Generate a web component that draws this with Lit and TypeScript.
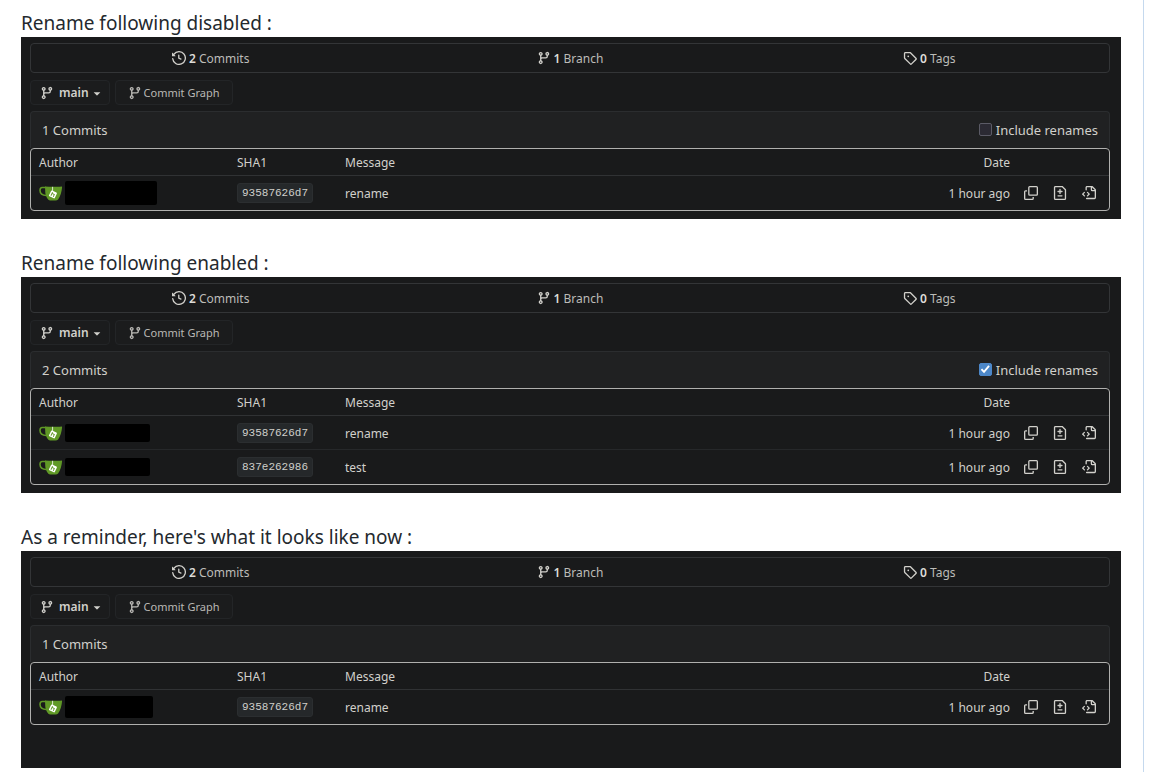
import { LitElement, html, css, svg, nothing } from "lit";
import { customElement, property } from "lit/decorators.js";

const icons: Record<string, unknown> = {
  history: svg`<path d="m.427 1.927 1.215 1.215a8.002 8.002 0 1 1-1.6 5.685.75.75 0 1 1 1.493-.154 6.5 6.5 0 1 0 1.18-4.458l1.358 1.358A.25.25 0 0 1 3.896 6H.25A.25.25 0 0 1 0 5.75V2.104a.25.25 0 0 1 .427-.177ZM7.75 4a.75.75 0 0 1 .75.75v2.992l2.028.812a.75.75 0 0 1-.557 1.392l-2.5-1A.751.751 0 0 1 7 8.25v-3.5A.75.75 0 0 1 7.75 4Z"/>`,
  branch: svg`<path d="M9.5 3.25a2.25 2.25 0 1 1 3 2.122V6A2.5 2.5 0 0 1 10 8.5H6a1 1 0 0 0-1 1v1.128a2.251 2.251 0 1 1-1.5 0V5.372a2.25 2.25 0 1 1 1.5 0v1.836A2.493 2.493 0 0 1 6 7h4a1 1 0 0 0 1-1v-.628A2.25 2.25 0 0 1 9.5 3.25Zm-6 0a.75.75 0 1 0 1.5 0 .75.75 0 0 0-1.5 0Zm8.25-.75a.75.75 0 1 0 0 1.5.75.75 0 0 0 0-1.5ZM4.25 12a.75.75 0 1 0 0 1.5.75.75 0 0 0 0-1.5Z"/>`,
  tag: svg`<path d="M1 7.775V2.75C1 1.784 1.784 1 2.75 1h5.025c.464 0 .91.184 1.238.513l6.25 6.25a1.75 1.75 0 0 1 0 2.474l-5.026 5.026a1.75 1.75 0 0 1-2.474 0l-6.25-6.25A1.752 1.752 0 0 1 1 7.775Zm1.5 0c0 .066.026.13.073.177l6.25 6.25a.25.25 0 0 0 .354 0l5.025-5.025a.25.25 0 0 0 0-.354l-6.25-6.25a.25.25 0 0 0-.177-.073H2.75a.25.25 0 0 0-.25.25ZM6 5a1 1 0 1 1 0 2 1 1 0 0 1 0-2Z"/>`,
  copy: svg`<path fill="none" stroke="currentColor" stroke-width="1.5" d="M6.5 .75h7.75a1 1 0 0 1 1 1V9.5a1 1 0 0 1-1 1H6.5a1 1 0 0 1-1-1V1.750a1 1 0 0 1 1-1ZM3.500 5.500H1.750a1 1 0 0 0-1 1v7.750a1 1 0 0 0 1 1H9.500a1 1 0 0 0 1-1V12.500"/>`,
  diff: svg`<path d="M1 1.75C1 .784 1.784 0 2.75 0h7.586c.464 0 .909.184 1.237.513l2.914 2.914c.329.328.513.773.513 1.237v9.586A1.75 1.75 0 0 1 13.25 16H2.75A1.75 1.75 0 0 1 1 14.25Zm1.75-.25a.25.25 0 0 0-.25.25v12.5c0 .138.112.25.25.25h10.5a.25.25 0 0 0 .25-.25V4.664a.25.25 0 0 0-.073-.177l-2.914-2.914a.25.25 0 0 0-.177-.073ZM8 3.25a.75.75 0 0 1 .75.75v1.5h1.5a.75.75 0 0 1 0 1.5h-1.5v1.5a.75.75 0 0 1-1.5 0V7h-1.5a.75.75 0 0 1 0-1.5h1.5V4A.75.75 0 0 1 8 3.25Zm-3 8a.75.75 0 0 1 .75-.75h4.5a.75.75 0 0 1 0 1.5h-4.5a.75.75 0 0 1-.75-.75Z"/>`,
  code: svg`<path d="M4 1.75C4 .784 4.784 0 5.75 0h5.586c.464 0 .909.184 1.237.513l2.914 2.914c.329.328.513.773.513 1.237v8.586A1.75 1.75 0 0 1 14.25 15h-9a.75.75 0 0 1 0-1.5h9a.25.25 0 0 0 .25-.25V6h-2.75A1.75 1.75 0 0 1 10 4.25V1.5H5.75a.25.25 0 0 0-.25.25v2.5a.75.75 0 0 1-1.5 0Zm1.72 4.97a.75.75 0 0 1 1.06 0l2 2a.75.75 0 0 1 0 1.06l-2 2a.749.749 0 1 1-1.06-1.06l1.47-1.47-1.47-1.47a.75.75 0 0 1 0-1.06ZM3.28 7.78 1.81 9.25l1.47 1.47a.751.751 0 1 1-1.06 1.06l-2-2a.75.75 0 0 1 0-1.06l2-2a.751.751 0 0 1 1.06 1.06Zm8.22-6.218V4.25c0 .138.112.25.25.25h2.688l-.011-.013-2.914-2.914-.013-.011Z"/>`,
  caret: svg`<path d="m4.427 7.427 3.396 3.396a.25.25 0 0 0 .354 0l3.396-3.396A.25.25 0 0 0 11.396 7H4.604a.25.25 0 0 0-.177.427Z"/>`,
};

const icon = (name: string) =>
  html`<svg width="14" height="14" viewBox="0 0 16 16" fill="currentColor" aria-hidden="true">${icons[name]}</svg>`;

const teacup = html`<svg width="24" height="18" viewBox="0 0 24 18" aria-hidden="true">
  <path d="M7 3.600H3.200C1.500 3.600 1 5 1 6.400c0 2.800 2.500 4.800 6.500 5" fill="none" stroke="#609926" stroke-width="1.500"/>
  <path d="M6 2.400C11 2.800 18 2.800 22.600 2.400c.4 0 .6.300.5.800-.5 4-1.500 9-4 12.200-.7.700-1.400 1-2.400 1h-5.500c-2.600 0-4.500-4.500-4.900-7.700Z" fill="#609926"/>
  <path d="M13.600 2.800v4.500" stroke="#fff" stroke-width=".8"/>
  <rect x="10.700" y="7.300" width="6.400" height="6.400" rx=".8" fill="#fff" transform="rotate(25 14 10.500)"/>
  <path d="M12.600 8.500v4M12.600 10h2.600v2.500" fill="none" stroke="#609926" stroke-width=".9" transform="rotate(25 14 10.500)"/>
</svg>`;

interface Commit {
  sha: string;
  message: string;
}

const RENAME: Commit = { sha: "93587626d7", message: "rename" };
const TEST: Commit = { sha: "837e262986", message: "test" };

@customElement("commit-history")
export class CommitHistory extends LitElement {
  @property({ attribute: false }) commits: Commit[] = [];
  @property() renames: "on" | "off" | "none" = "none";
  @property() mask: "small" | "medium" | "large" = "small";

  static styles = css`
    :host {
      display: block;
      box-sizing: border-box;
      padding: 6px 11px 8px 9px;
      background: #191a1b;
      color: #d1d0cb;
      font-size: 12px;
      line-height: 20px;
    }
    svg { display: block; flex: none; }
    .stats {
      display: grid;
      grid-template-columns: repeat(3, 1fr);
      border: 1px solid #333537;
      border-radius: 4px;
    }
    .stats a {
      display: flex;
      align-items: center;
      justify-content: center;
      gap: 3px;
      height: 28px;
      color: inherit;
      text-decoration: none;
    }
    .stats span { padding-top: 2px; color: #bcbcb8; }
    .stats b { font-weight: 600; color: #dddcd8; }
    .tools { display: flex; gap: 5px; margin: 7px 0 6px; }
    .tools button {
      display: flex;
      align-items: center;
      height: 25px;
      border: 1px solid #232527;
      border-radius: 4px;
      background: #1b1c1d;
      color: inherit;
      font: inherit;
    }
    .tools .ref { gap: 5px; padding: 0 5px 0 9px; font-weight: 600; }
    .ref .caret { margin-left: -4px; }
    .tools .graph { gap: 2px; padding: 0 12px; font-size: 11px; color: #b9b8b4; }
    .head {
      display: flex;
      align-items: center;
      justify-content: space-between;
      height: 35px;
      padding: 0 11px 1px;
      border: 1px solid #2b2d2f;
      border-bottom: 0;
      border-radius: 4px 4px 0 0;
      background: #202122;
      font-size: 13px;
    }
    .head label { display: flex; align-items: center; gap: 4px; }
    .head input {
      appearance: none;
      display: grid;
      width: 13px;
      height: 13px;
      margin: 0;
      border: 1px solid #5b5b66;
      border-radius: 2px;
      background: #2b2a33;
    }
    .head input:checked { border-color: #4c87c8; background: #4c87c8; }
    .head input:checked::before {
      content: "";
      place-self: center;
      width: 9px;
      height: 9px;
      background: #fff;
      clip-path: polygon(0 52%, 16% 38%, 36% 60%, 84% 4%, 100% 18%, 37% 92%);
    }
    .frame { padding-bottom: 1px; border: 1px solid #b0b0ae; border-radius: 4px; }
    table { width: 100%; border-collapse: collapse; table-layout: fixed; }
    th, td { padding: 0 8px; text-align: left; font-weight: 400; }
    th { height: 24px; padding-top: 2px; }
    td { height: 33px; border-top: 1px solid #26282a; }
    td.text { height: 31px; padding-top: 2px; }
    tr:first-child td { border-top-color: #303234; }
    .author { width: 182px; }
    .sha { width: 92px; }
    .date { width: 84px; text-align: right; }
    .acts { width: 75px; }
    .person { display: flex; align-items: center; gap: 2px; }
    .mask { display: block; border-radius: 2px; background: #000; }
    .small { width: 85px; height: 18px; }
    .medium { width: 88px; height: 22px; }
    .large { width: 92px; height: 24px; }
    .hash {
      display: inline-block;
      padding: 0 4px;
      border: 1px solid #2b2e30;
      border-radius: 3px;
      background: #25282a;
      color: #cfcfcb;
      font: 11px/18px "Liberation Mono", monospace;
      text-decoration: none;
      vertical-align: middle;
    }
    td.acts { padding: 0 6px; }
    .actions { display: flex; gap: 15px; }
    .actions button {
      padding: 0;
      border: 0;
      background: none;
      color: inherit;
    }
  `;

  render() {
    return html`
      <nav class="stats" aria-label="Repository">
        <a href="#commits">${icon("history")}<span><b>2</b> Commits</span></a>
        <a href="#branches">${icon("branch")}<span><b>1</b> Branch</span></a>
        <a href="#tags">${icon("tag")}<span><b>0</b> Tags</span></a>
      </nav>
      <div class="tools">
        <button class="ref">${icon("branch")}<span>main</span><span class="caret">${icon("caret")}</span></button>
        <button class="graph">${icon("branch")}<span>Commit Graph</span></button>
      </div>
      <div class="head">
        <span>${this.commits.length} Commits</span>
        ${this.renames === "none"
          ? nothing
          : html`<label><input type="checkbox" ?checked=${this.renames === "on"} />Include renames</label>`}
      </div>
      <div class="frame">
        <table>
          <thead>
            <tr>
              <th class="author">Author</th>
              <th class="sha">SHA1</th>
              <th>Message</th>
              <th class="date">Date</th>
              <th class="acts"></th>
            </tr>
          </thead>
          <tbody>
            ${this.commits.map(
              (c) => html`<tr>
                <td><div class="person">${teacup}<span class="mask ${this.mask}"></span></div></td>
                <td><a class="hash" href="#${c.sha}">${c.sha}</a></td>
                <td class="text">${c.message}</td>
                <td class="text date">1 hour ago</td>
                <td class="acts">
                  <div class="actions">
                    <button aria-label="Copy SHA">${icon("copy")}</button>
                    <button aria-label="View diff">${icon("diff")}</button>
                    <button aria-label="View code">${icon("code")}</button>
                  </div>
                </td>
              </tr>`
            )}
          </tbody>
        </table>
      </div>
    `;
  }
}

@customElement("app-root")
export class AppRoot extends LitElement {
  static styles = css`
    :host {
      display: block;
      box-sizing: border-box;
      min-height: 100vh;
      padding-right: 6px;
      background: #fff;
      font-family: "Noto Sans", sans-serif;
    }
    main {
      box-sizing: border-box;
      display: flex;
      flex-direction: column;
      gap: 30px;
      min-height: 100vh;
      padding: 9px 22px 4px 21px;
      border-right: 1px solid #c5d9ee;
    }
    h2 {
      margin: 0;
      color: #24292e;
      font-size: 19px;
      font-weight: 400;
      line-height: 28px;
    }
    .last { display: flex; flex-direction: column; flex: 1; }
    .last commit-history { flex: 1; }
  `;

  render() {
    return html`<main>
      <section>
        <h2>Rename following disabled :</h2>
        <commit-history .commits=${[RENAME]} renames="off" mask="large"></commit-history>
      </section>
      <section>
        <h2>Rename following enabled :</h2>
        <commit-history .commits=${[RENAME, TEST]} renames="on" mask="small"></commit-history>
      </section>
      <section class="last">
        <h2>As a reminder, here's what it looks like now :</h2>
        <commit-history .commits=${[RENAME]} renames="none" mask="medium"></commit-history>
      </section>
    </main>`;
  }
}
